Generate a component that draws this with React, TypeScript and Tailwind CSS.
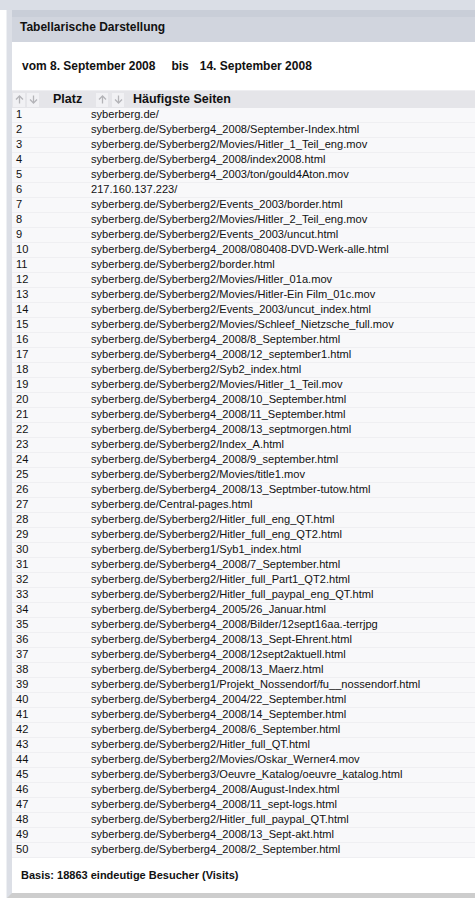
import React from 'react';

const pages: string[] = [
  'syberberg.de/',
  'syberberg.de/Syberberg4_2008/September-Index.html',
  'syberberg.de/Syberberg2/Movies/Hitler_1_Teil_eng.mov',
  'syberberg.de/Syberberg4_2008/index2008.html',
  'syberberg.de/Syberberg4_2003/ton/gould4Aton.mov',
  '217.160.137.223/',
  'syberberg.de/Syberberg2/Events_2003/border.html',
  'syberberg.de/Syberberg2/Movies/Hitler_2_Teil_eng.mov',
  'syberberg.de/Syberberg2/Events_2003/uncut.html',
  'syberberg.de/Syberberg4_2008/080408-DVD-Werk-alle.html',
  'syberberg.de/Syberberg2/border.html',
  'syberberg.de/Syberberg2/Movies/Hitler_01a.mov',
  'syberberg.de/Syberberg2/Movies/Hitler-Ein Film_01c.mov',
  'syberberg.de/Syberberg2/Events_2003/uncut_index.html',
  'syberberg.de/Syberberg2/Movies/Schleef_Nietzsche_full.mov',
  'syberberg.de/Syberberg4_2008/8_September.html',
  'syberberg.de/Syberberg4_2008/12_september1.html',
  'syberberg.de/Syberberg2/Syb2_index.html',
  'syberberg.de/Syberberg2/Movies/Hitler_1_Teil.mov',
  'syberberg.de/Syberberg4_2008/10_September.html',
  'syberberg.de/Syberberg4_2008/11_September.html',
  'syberberg.de/Syberberg4_2008/13_septmorgen.html',
  'syberberg.de/Syberberg2/Index_A.html',
  'syberberg.de/Syberberg4_2008/9_september.html',
  'syberberg.de/Syberberg2/Movies/title1.mov',
  'syberberg.de/Syberberg4_2008/13_Septmber-tutow.html',
  'syberberg.de/Central-pages.html',
  'syberberg.de/Syberberg2/Hitler_full_eng_QT.html',
  'syberberg.de/Syberberg2/Hitler_full_eng_QT2.html',
  'syberberg.de/Syberberg1/Syb1_index.html',
  'syberberg.de/Syberberg4_2008/7_September.html',
  'syberberg.de/Syberberg2/Hitler_full_Part1_QT2.html',
  'syberberg.de/Syberberg2/Hitler_full_paypal_eng_QT.html',
  'syberberg.de/Syberberg4_2005/26_Januar.html',
  'syberberg.de/Syberberg4_2008/Bilder/12sept16aa.-terrjpg',
  'syberberg.de/Syberberg4_2008/13_Sept-Ehrent.html',
  'syberberg.de/Syberberg4_2008/12sept2aktuell.html',
  'syberberg.de/Syberberg4_2008/13_Maerz.html',
  'syberberg.de/Syberberg1/Projekt_Nossendorf/fu__nossendorf.html',
  'syberberg.de/Syberberg4_2004/22_September.html',
  'syberberg.de/Syberberg4_2008/14_September.html',
  'syberberg.de/Syberberg4_2008/6_September.html',
  'syberberg.de/Syberberg2/Hitler_full_QT.html',
  'syberberg.de/Syberberg2/Movies/Oskar_Werner4.mov',
  'syberberg.de/Syberberg3/Oeuvre_Katalog/oeuvre_katalog.html',
  'syberberg.de/Syberberg4_2008/August-Index.html',
  'syberberg.de/Syberberg4_2008/11_sept-logs.html',
  'syberberg.de/Syberberg2/Hitler_full_paypal_QT.html',
  'syberberg.de/Syberberg4_2008/13_Sept-akt.html',
  'syberberg.de/Syberberg4_2008/2_September.html',
];

const SortArrow: React.FC<{ down?: boolean }> = ({ down }) => (
  <span className="w-[12px] h-[14px] bg-[#f1f1f4] flex items-center justify-center">
    <svg width="9" height="9" viewBox="0 0 9 9" fill="none" stroke="#b4b4b8" strokeWidth="1.3">
      {down ? (
        <>
          <line x1="4.5" y1="0.5" x2="4.5" y2="8" />
          <polyline points="1,4.5 4.5,8 8,4.5" />
        </>
      ) : (
        <>
          <line x1="4.5" y1="1" x2="4.5" y2="8.5" />
          <polyline points="1,4.5 4.5,1 8,4.5" />
        </>
      )}
    </svg>
  </span>
);

export default function App() {
  return (
    <div className="w-[475px] h-[917px] overflow-hidden bg-white text-[#111] font-['Liberation_Sans',Arial,sans-serif]">
      <div className="h-[10px] bg-[#dadee6]" />
      <div className="flex">
        <div className="w-[7px] shrink-0 border-r border-r-[#eef0f3]" />
        <div className="flex-1 min-w-0 border-l-[5px] border-l-[#dcdfe6] border-b-[5px] border-b-[#cdcdcd]">
          {/* panel title */}
          <div className="h-[32px] border-t-[7px] border-t-[#c9ced8] bg-[#d1d5de] pl-[8px] pt-[1px] text-[12px] font-bold">
            Tabellarische Darstellung
          </div>

          {/* period */}
          <div className="h-[48px] flex items-center pl-[10px] text-[12px] font-bold">
            <span>vom 8. September 2008</span>
            <span className="ml-[16px]">bis</span>
            <span className="ml-[11px]">14. September 2008</span>
          </div>

          {/* table */}
          <div className="h-[18px] flex items-center bg-[#e5e5e9] border-t border-t-[#eeeef1] text-[12.5px] font-bold">
            <div className="w-[78px] shrink-0 flex items-center pl-[1px]">
              <SortArrow />
              <span className="w-[2px]" />
              <SortArrow down />
              <span className="ml-[14px]">Platz</span>
            </div>
            <div className="flex items-center pl-[6px]">
              <SortArrow />
              <span className="w-[4px]" />
              <SortArrow down />
              <span className="ml-[9px]">Häufigste Seiten</span>
            </div>
          </div>
          {pages.map((p, i) => (
            <div
              key={i}
              className="h-[15px] flex items-center bg-[#f8f8fa] border-b border-b-[#efeff2] text-[11.1px] leading-none whitespace-nowrap"
            >
              <div className="w-[78px] shrink-0 pl-[4px]">{i + 1}</div>
              <div className="pl-[1px]">{p}</div>
            </div>
          ))}

          {/* footer */}
          <div className="h-[35px] flex items-center pl-[9px] text-[11px] font-bold">
            Basis: 18863 eindeutige Besucher (Visits)
          </div>
        </div>
      </div>
    </div>
  );
}
